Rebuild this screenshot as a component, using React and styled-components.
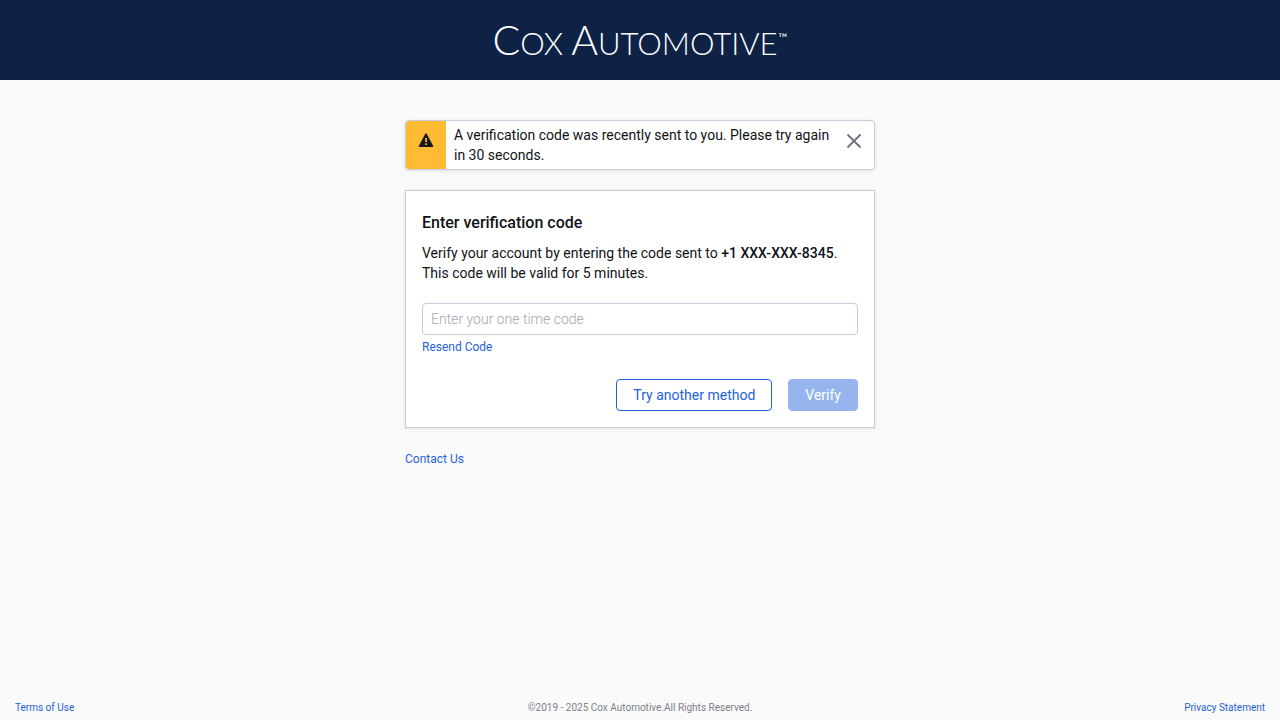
import React, { useState } from "react";
import styled, { createGlobalStyle, css } from "styled-components";

const GlobalStyle = createGlobalStyle`
  *, *::before, *::after { box-sizing: border-box; }
  body {
    margin: 0;
    background: #fafafa;
    color: #111216;
    font-family: Roboto, "Liberation Sans", sans-serif;
    font-size: 14px;
    line-height: 20px;
  }
`;

const Page = styled.div`
  display: flex;
  flex-direction: column;
  min-height: 100vh;
`;

const Header = styled.header`
  display: flex;
  align-items: center;
  justify-content: center;
  height: 80px;
  background: #0e2245;
`;

const Logo = styled.div`
  display: flex;
  align-items: baseline;
  gap: 8px;
  padding-top: 2px;
  color: #fff;
  font-family: Lato, "Liberation Sans", sans-serif;
  font-weight: 300;
  font-size: 31px;
  line-height: 40px;
`;

const Initial = styled.span`
  font-size: 41px;
`;

const TradeMark = styled.sup`
  margin-left: 1px;
  font-size: 12px;
  font-weight: 400;
  line-height: 0;
  vertical-align: 13px;
`;

const Main = styled.main`
  flex: 1;
  width: 100%;
  max-width: 470px;
  margin: 0 auto;
  padding-top: 40px;
`;

const Alert = styled.div`
  display: flex;
  margin-bottom: 20px;
  overflow: hidden;
  background: #fff;
  border: 1px solid #c9cbdc;
  border-radius: 4px;
  box-shadow: 0 1px 4px rgba(0, 0, 0, 0.1);
`;

const AlertMark = styled.div`
  display: flex;
  justify-content: center;
  width: 40px;
  padding-top: 11px;
  background: #ffbb33;
`;

const AlertText = styled.p`
  flex: 1;
  margin: 0;
  padding: 4px 0 4px 8px;
`;

const CloseButton = styled.button`
  display: flex;
  align-items: center;
  justify-content: center;
  width: 40px;
  height: 40px;
  padding: 0;
  background: none;
  border: 0;
  color: #6d717c;
  cursor: pointer;
`;

const Card = styled.form`
  padding: 20px 16px 16px;
  background: #fff;
  border: 1px solid #c9cbdc;
  box-shadow: 0 1px 4px rgba(0, 0, 0, 0.1);
`;

const Title = styled.h1`
  margin: 0 0 8px;
  font-size: 16px;
  line-height: 24px;
  font-weight: 500;
`;

const Message = styled.p`
  margin: 0 0 20px;
`;

const Strong = styled.strong`
  font-weight: 500;
`;

const CodeInput = styled.input`
  display: block;
  width: 100%;
  height: 32px;
  margin-bottom: 4px;
  padding: 0 8px;
  background: #fff;
  border: 1px solid #c9cbdc;
  border-radius: 4px;
  color: inherit;
  font: inherit;

  &::placeholder {
    color: #a3a6b1;
    font-weight: 300;
    opacity: 1;
  }
`;

const Link = styled.a`
  display: block;
  width: fit-content;
  color: #1f62d9;
  font-size: ${({ $small }) => ($small ? "10px" : "12px")};
  line-height: 16px;
  text-decoration: none;
`;

const Actions = styled.div`
  display: flex;
  justify-content: flex-end;
  gap: 16px;
  margin-top: 24px;
`;

const Button = styled.button`
  height: 32px;
  padding: 0 16px;
  border: 1px solid #1f62d9;
  border-radius: 4px;
  background: #fff;
  color: #1f62d9;
  font: inherit;
  cursor: pointer;

  ${({ $primary }) =>
    $primary &&
    css`
      background: #1f62d9;
      color: #fff;
    `}

  &:disabled {
    background: #96b5ee;
    border-color: #96b5ee;
    cursor: default;
  }
`;

const Contact = styled.div`
  display: flex;
  margin-top: 23px;
`;

const Footer = styled.footer`
  display: grid;
  grid-template-columns: 1fr auto 1fr;
  padding: 0 15px 4px;
`;

const Copyright = styled.span`
  color: #7d818b;
  font-size: 10px;
  line-height: 16px;
`;

const FooterEnd = styled.div`
  display: flex;
  justify-content: flex-end;
`;

const WarningIcon = () => (
  <svg width="16" height="16" viewBox="0 0 16 16" aria-hidden="true">
    <path
      d="M8.7 1.7 L15.1 13.7 Q15.6 15 14.3 15 H1.7 Q.4 15 .9 13.7 L7.3 1.7 Q8 .8 8.7 1.7 Z"
      fill="#16181d"
    />
    <path d="M7.2 6h1.7v4H7.2zM7.2 11.3h1.7V13H7.2z" fill="#ffbb33" />
  </svg>
);

const CloseIcon = () => (
  <svg width="16" height="16" viewBox="0 0 16 16" aria-hidden="true">
    <path d="M1.5 1.5l13 13M14.5 1.5l-13 13" stroke="currentColor" strokeWidth="1.8" />
  </svg>
);

export default function App() {
  const [code, setCode] = useState("");
  const [alertOpen, setAlertOpen] = useState(true);

  return (
    <Page>
      <GlobalStyle />
      <Header>
        <Logo>
          <span>
            <Initial>C</Initial>OX
          </span>
          <span>
            <Initial>A</Initial>UTOMOTIVE<TradeMark>™</TradeMark>
          </span>
        </Logo>
      </Header>
      <Main>
        {alertOpen && (
          <Alert role="alert">
            <AlertMark>
              <WarningIcon />
            </AlertMark>
            <AlertText>
              A verification code was recently sent to you. Please try again in 30 seconds.
            </AlertText>
            <CloseButton type="button" aria-label="Close" onClick={() => setAlertOpen(false)}>
              <CloseIcon />
            </CloseButton>
          </Alert>
        )}
        <Card onSubmit={(event) => event.preventDefault()}>
          <Title>Enter verification code</Title>
          <Message>
            Verify your account by entering the code sent to <Strong>+1 XXX-XXX-8345</Strong>.
            <br />
            This code will be valid for 5 minutes.
          </Message>
          <CodeInput
            type="text"
            aria-label="Enter your one time code"
            placeholder="Enter your one time code"
            value={code}
            onChange={(event) => setCode(event.target.value)}
          />
          <Link href="#resend">Resend Code</Link>
          <Actions>
            <Button type="button">Try another method</Button>
            <Button type="submit" $primary disabled={!code}>
              Verify
            </Button>
          </Actions>
        </Card>
        <Contact>
          <Link href="#contact">Contact Us</Link>
        </Contact>
      </Main>
      <Footer>
        <Link $small href="#terms">
          Terms of Use
        </Link>
        <Copyright>©2019 - 2025 Cox Automotive.All Rights Reserved.</Copyright>
        <FooterEnd>
          <Link $small href="#privacy">
            Privacy Statement
          </Link>
        </FooterEnd>
      </Footer>
    </Page>
  );
}
